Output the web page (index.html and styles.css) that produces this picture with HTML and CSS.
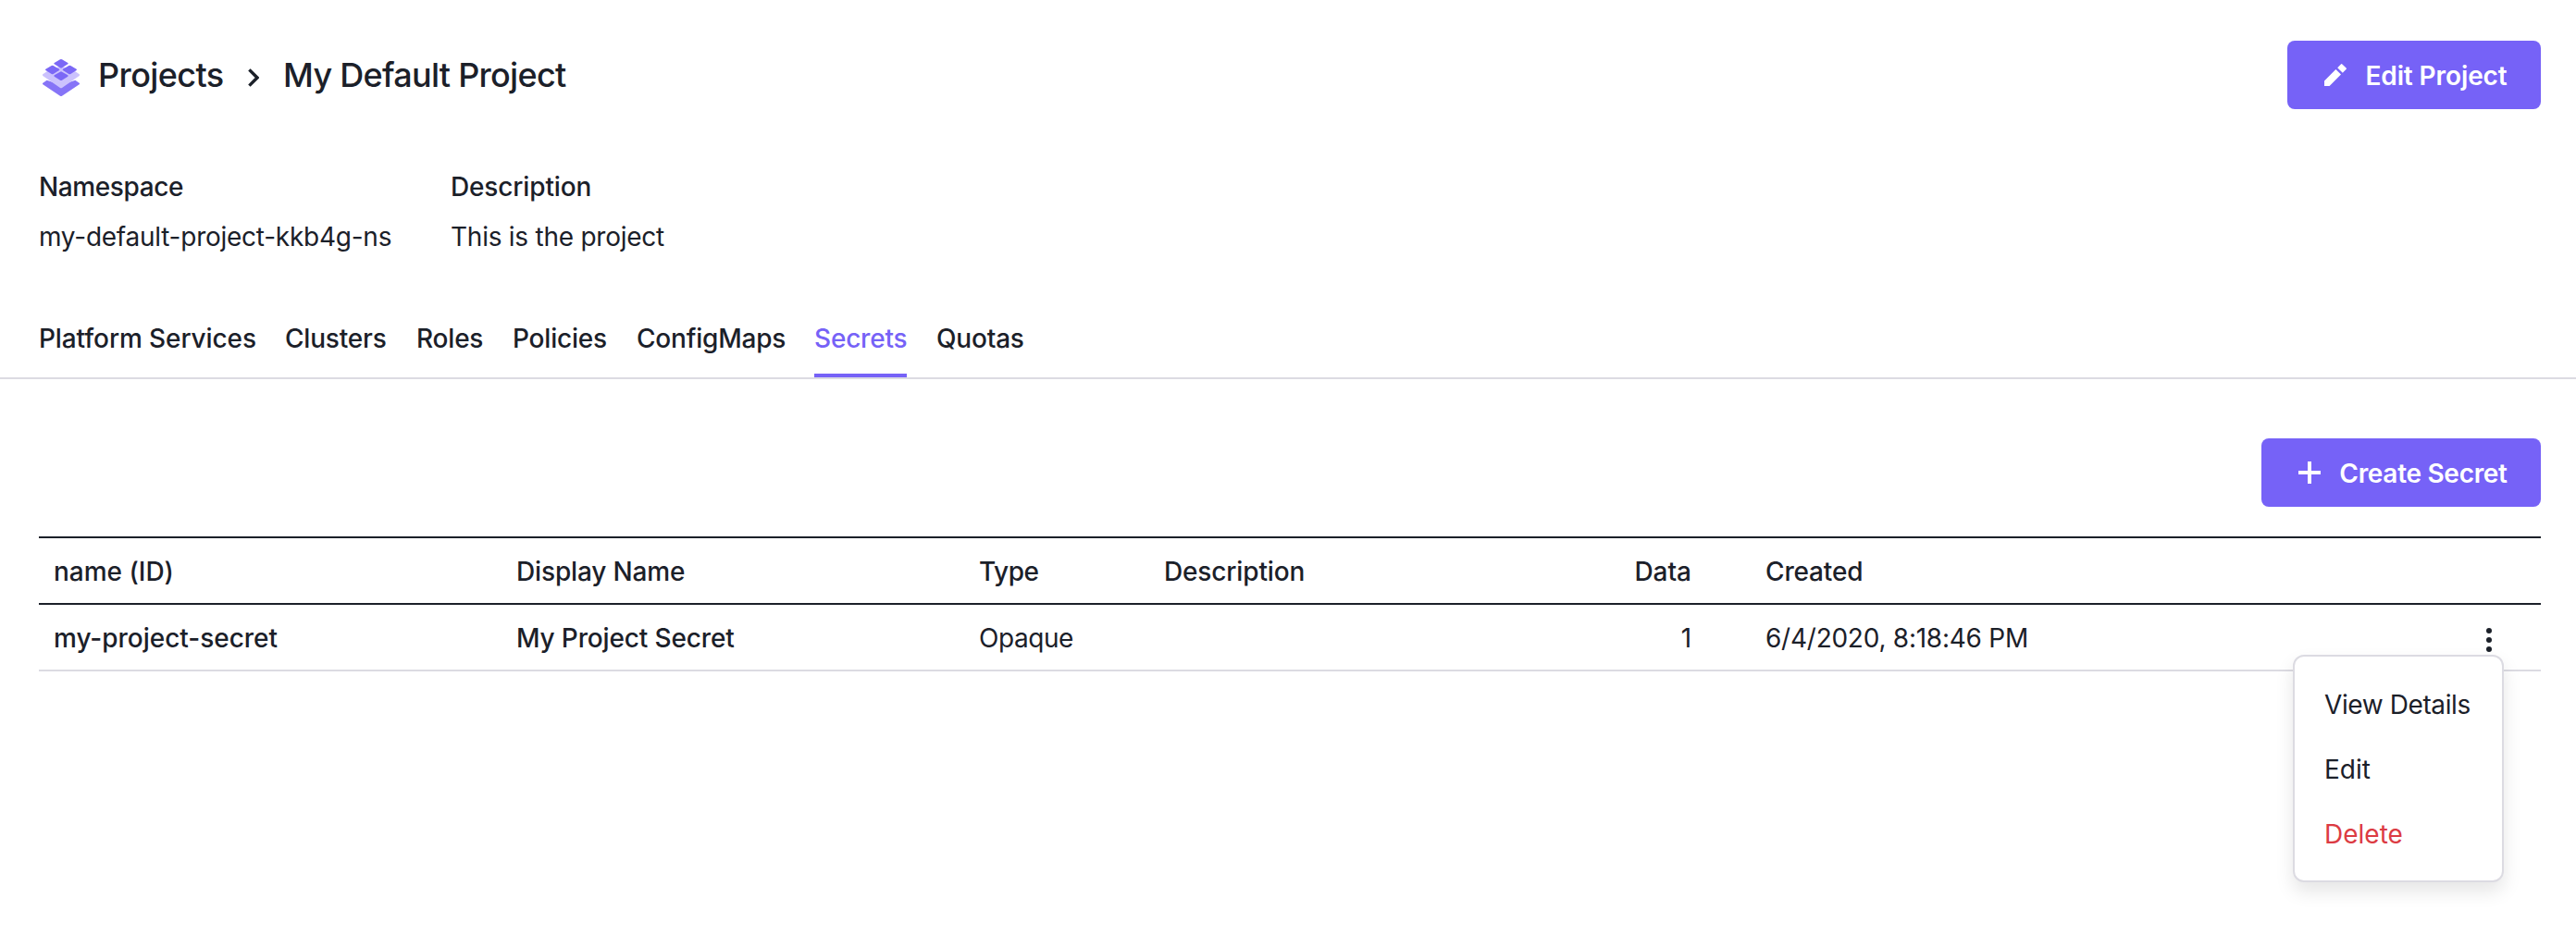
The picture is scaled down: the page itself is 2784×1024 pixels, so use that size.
FILE: index.html
```html
<!DOCTYPE html>
<html lang="en">
<head>
<meta charset="utf-8">
<title>My Default Project - Secrets</title>
<link rel="stylesheet" href="styles.css">
</head>
<body>
<header class="page-header">
  <nav class="breadcrumb">
    <svg class="logo" viewBox="0 0 120 120" width="40" height="40">
      <path fill="#8674f7" d="M14 68 36 76 60 84 84 76 106 68 119 77q2 2 0 5L63 119q-3 2-6 0L1 82q-2-3 0-5z"/>
      <path fill="#cbc2fd" d="M60 22 106 40 119 49q2 2 0 5L63 93q-3 2-6 0L1 54q-2-3 0-5l13-9z"/>
      <g fill="#7b68f6">
        <path id="tile" d="M57 1q3-2 6 0l19 11q2 2 0 4L63 28q-3 2-6 0L38 16q-2-2 0-4z"/>
        <use href="#tile" x="-28" y="20"/>
        <use href="#tile" x="28" y="20"/>
        <use href="#tile" y="40"/>
      </g>
    </svg>
    <a class="crumb crumb-root">Projects</a>
    <svg class="chevron" viewBox="0 0 12 20" width="12" height="20"><path d="M1.4 1.4 10 10 1.4 18.6" fill="none" stroke="#1b2029" stroke-width="3.4"/></svg>
    <span class="crumb crumb-current">My Default Project</span>
  </nav>
  <button class="button">
    <svg viewBox="0 0 24 24" width="24" height="24" fill="#fff"><path d="M0 18.4V24h5.600L18 11.600 12.400 6zM14.200 4.200 19.800 9.800 24 5.600Q24 5 23.600 4.600L19.400 .4Q19 0 18.400 0z"/></svg>
    <span class="edit-label">Edit Project</span>
  </button>
</header>

<dl class="details">
  <div class="detail"><dt class="detail-ns">Namespace</dt><dd>my-default-project-kkb4g-ns</dd></div>
  <div class="detail"><dt>Description</dt><dd>This is the project</dd></div>
</dl>

<nav class="tabs">
  <a class="tab first">Platform Services</a>
  <a class="tab">Clusters</a>
  <a class="tab">Roles</a>
  <a class="tab">Policies</a>
  <a class="tab">ConfigMaps</a>
  <a class="tab active">Secrets</a>
  <a class="tab">Quotas</a>
</nav>

<main class="content">
  <div class="toolbar">
    <button class="button">
      <svg viewBox="0 0 24 24" width="24" height="24" fill="#fff"><path d="M10 0h4v10h10v4H14v10h-4V14H0v-4h10z"/></svg>
      <span class="create-label">Create Secret</span>
    </button>
  </div>
  <div class="table">
    <div class="row head">
      <span class="even">name (ID)</span><span>Display Name</span><span class="tight">Type</span><span>Description</span><span class="data even">Data</span><span>Created</span><span></span>
    </div>
    <div class="row">
      <span class="strong even">my-project-secret</span><span class="strong">My Project Secret</span><span class="tight">Opaque</span><span></span><span class="data">1</span><span class="date">6/4/2020, 8:18:46 PM</span>
      <span class="actions">
        <svg viewBox="0 0 6 26" width="6" height="26" fill="#1b2029"><circle cx="3" cy="3" r="3"/><circle cx="3" cy="13" r="3"/><circle cx="3" cy="23" r="3"/></svg>
        <span class="menu">
          <a class="tight">View Details</a>
          <a>Edit</a>
          <a class="danger">Delete</a>
        </span>
      </span>
    </div>
  </div>
</main>
</body>
</html>
```
FILE: styles.css
```css
* { box-sizing: border-box; }

body {
  margin: 0;
  min-height: 1024px;
  background: #fff;
  color: #1b2029;
  font: 400 28px/40px Inter, "Liberation Sans", sans-serif;
  white-space: nowrap;
}

.page-header {
  display: flex;
  justify-content: space-between;
  align-items: center;
  padding: 44px 38px 0 46px;
}

.breadcrumb { display: flex; align-items: center; }
.logo { margin-top: 6px; }
.crumb { font-size: 36px; font-weight: 500; line-height: 44px; }
.crumb-root { width: 138px; margin: 0 24px 0 20px; letter-spacing: -0.6px; }
.chevron { margin: 6px 26px 0 0; }
.crumb-current { letter-spacing: -0.72px; }

.button {
  display: flex;
  align-items: center;
  height: 74px;
  padding: 0 36px 0 40px;
  border: 0;
  border-radius: 8px;
  background: #7662f7;
  color: #fff;
  font: 600 28px/40px Inter, "Liberation Sans", sans-serif;
}
.button span { margin-left: 20px; padding-top: 2px; }
.edit-label { width: 154px; letter-spacing: -0.1px; }
.create-label { width: 182px; letter-spacing: -0.3px; }

.details {
  display: grid;
  grid-template-columns: 445px auto;
  margin: 64px 0 0;
  padding: 0 42px;
}
.detail { display: grid; gap: 14px; }
dt { font-weight: 500; letter-spacing: -0.15px; }
.detail-ns { letter-spacing: -0.4px; }
dd { margin: 0; letter-spacing: -0.25px; }

.tabs {
  display: grid;
  grid-template-columns: 234px 110px 72px 102px 160px 100px 96px;
  gap: 32px;
  margin-top: 70px;
  padding: 0 42px;
  border-bottom: 2px solid #dcdbe2;
}
.tab {
  padding-bottom: 18px;
  border-bottom: 4px solid transparent;
  font-weight: 500;
  letter-spacing: -0.2px;
}
.tab.first { letter-spacing: -0.1px; }
.tab.active { color: #7662f7; border-color: #7662f7; }

.content { padding: 64px 38px 0 42px; }
.toolbar { display: flex; justify-content: flex-end; margin-bottom: 32px; }

.row {
  display: grid;
  grid-template-columns: 500px 500px 200px 450px 200px 1fr 72px;
  align-items: center;
  height: 72px;
  border-bottom: 2px solid #dcdbe2;
}
.row > span { padding: 2px 0 0 16px; letter-spacing: -0.15px; }
.head {
  height: 74px;
  border-top: 2px solid #1b2029;
  border-bottom-color: #1b2029;
  font-weight: 500;
}
.row > .data { padding-right: 64px; text-align: right; }
.strong { font-weight: 500; }
.row > .tight, .tight { letter-spacing: -0.45px; }
.row > .date { letter-spacing: -0.25px; }
.row > .even { letter-spacing: -0.03px; }

.row > .actions {
  position: relative;
  display: flex;
  padding: 6px 0 0 13px;
}
.menu {
  position: absolute;
  top: 35px;
  right: 40px;
  display: grid;
  gap: 30px;
  width: 228px;
  padding: 32px 32px 30px;
  border: 2px solid #dcdbe2;
  border-radius: 12px;
  background: #fff;
  box-shadow: 0 10px 20px rgba(0, 0, 0, 0.1);
  letter-spacing: 0;
}
.menu .tight { letter-spacing: -0.4px; }
.danger { color: #dc3b43; }
```
